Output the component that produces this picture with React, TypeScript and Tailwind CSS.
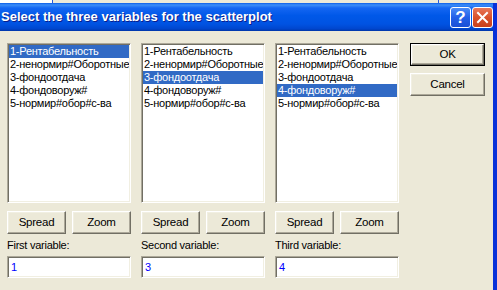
import React from "react";

const items = [
  "1-Рентабельность",
  "2-ненормир#Оборотные",
  "3-фондоотдача",
  "4-фондоворуж#",
  "5-нормир#обор#с-ва",
];

function ListBox({ selected }: { selected: number }) {
  return (
    <div className="w-[124px] h-[160px] border border-t-[#ACA899] border-l-[#ACA899] border-r-white border-b-white">
      <div className="w-full h-full bg-white shadow-[inset_1px_1px_0_#716F64,inset_-1px_-1px_0_#F1EFE2] p-[1px] overflow-hidden">
        {items.map((t, i) => (
          <div
            key={t}
            className={
              "h-[13px] leading-[13px] pl-[1px] whitespace-nowrap overflow-hidden " +
              (i === selected ? "bg-[#316AC5] text-white" : "text-black")
            }
          >
            {t}
          </div>
        ))}
      </div>
    </div>
  );
}

function Btn({ label, w, h = 23 }: { label: string; w: number; h?: number }) {
  return (
    <div
      className="border border-t-white border-l-white border-r-[#716F64] border-b-[#716F64] bg-[#ECE9D8]"
      style={{ width: w, height: h }}
    >
      <div className="w-full h-full flex items-center justify-center shadow-[inset_-1px_-1px_0_#ACA899,inset_1px_1px_0_#F1EFE2] text-black text-[11.5px]">
        {label}
      </div>
    </div>
  );
}

function Field({ value }: { value: string }) {
  return (
    <div className="w-[124px] h-[22px] border border-t-[#ACA899] border-l-[#ACA899] border-r-white border-b-white">
      <div className="w-full h-full bg-white shadow-[inset_1px_1px_0_#716F64,inset_-1px_-1px_0_#F1EFE2] pl-[3px] flex items-center text-[#0000FF]">
        {value}
      </div>
    </div>
  );
}

function Column({ selected, label, value }: { selected: number; label: string; value: string }) {
  return (
    <div className="flex flex-col w-[124px]">
      <ListBox selected={selected} />
      <div className="flex gap-[6px] mt-[8px]">
        <Btn label="Spread" w={59} />
        <Btn label="Zoom" w={59} />
      </div>
      <div className="h-[22px] flex items-center text-black">{label}</div>
      <Field value={value} />
    </div>
  );
}

export default function App() {
  return (
    <div
      className="w-[497px] h-[290px] bg-[#ECE9D8] flex flex-col overflow-hidden text-[11px] tracking-[-0.25px]"
      style={{ fontFamily: '"Liberation Sans", Arial, sans-serif' }}
    >
      <div className="h-[3px] flex">
        <div className="w-[52px] bg-white" />
        <div className="w-[1px] bg-[#2A5AD8]" />
        <div className="w-[385px] bg-[#ECE9D8]" />
        <div className="w-[1px] bg-[#2A5AD8]" />
        <div className="flex-1 bg-[#ECE9D8]" />
      </div>
      <div className="flex flex-1">
        <div className="flex-1 flex flex-col">
          <div className="h-[28px] flex items-center justify-between bg-[linear-gradient(to_bottom,#0A5DE8_0%,#3C8EF8_7%,#1466F2_18%,#0058E8_45%,#0053E2_75%,#0046CE_92%,#0036A8_100%)]">
            <div className="pl-[1px] text-white font-bold text-[13px] tracking-normal [text-shadow:1px_1px_0_#0A1E8C]">
              Select the three variables for the scatterplot
            </div>
            <div className="flex gap-[1px] mt-[1px]">
              <div className="w-[21px] h-[21px] rounded-[3px] border border-white bg-[linear-gradient(to_bottom,#4A8CF7,#2360E8_50%,#1A4FD6)] flex items-center justify-center text-white font-bold text-[17px] leading-none tracking-normal">
                ?
              </div>
              <div className="w-[21px] h-[21px] rounded-[3px] border border-white bg-[linear-gradient(to_bottom,#E8775A,#D9522C_50%,#C7401C)] flex items-center justify-center">
                <svg width="13" height="13" viewBox="0 0 13 13">
                  <path d="M2 2 L11 11 M11 2 L2 11" stroke="white" strokeWidth="2" strokeLinecap="square" />
                </svg>
              </div>
            </div>
          </div>
          <div className="flex pl-[7px] pt-[12px]">
            <div className="flex gap-[10px]">
              <Column selected={0} label="First variable:" value="1" />
              <Column selected={2} label="Second variable:" value="3" />
              <Column selected={3} label="Third variable:" value="4" />
            </div>
            <div className="flex flex-col gap-[7px] ml-[11px]">
              <div className="border border-black">
                <Btn label="OK" w={73} h={21} />
              </div>
              <Btn label="Cancel" w={75} h={23} />
            </div>
          </div>
        </div>
        <div className="w-[4px] bg-[#0831D9]" />
      </div>
    </div>
  );
}
